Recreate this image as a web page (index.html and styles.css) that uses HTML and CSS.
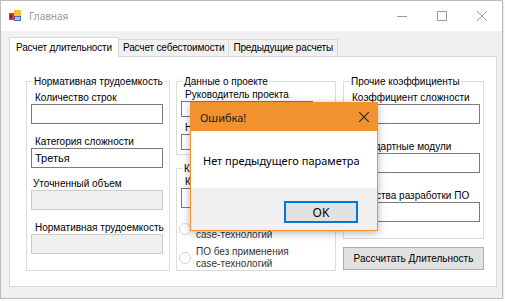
FILE: index.html
```html
<!DOCTYPE html>
<html lang="ru">
<head>
    <meta charset="UTF-8">
    <title>Главная</title>
    <link rel="stylesheet" href="styles.css">
</head>
<body>
    <div class="window">
        <div class="titlebar">
            <svg class="app-icon" width="12" height="12" viewBox="0 0 12 12">
                <rect x="0" y="3" width="5" height="7" fill="#d63a2f"/>
                <rect x="1" y="5" width="2" height="3" fill="#7a1c16"/>
                <rect x="5" y="0" width="7" height="6" fill="#f5c12e"/>
                <rect x="5" y="6" width="7" height="5" fill="#3d6fb8"/>
                <rect x="6" y="7" width="5" height="3" fill="#a9c4ea"/>
            </svg>
            <span class="title">Главная</span>
            <div class="caption-buttons">
                <span class="cap-btn">
                    <svg width="10" height="10" viewBox="0 0 10 10"><path d="M0 5.5h10" stroke="#9a9a9a" stroke-width="1"/></svg>
                </span>
                <span class="cap-btn">
                    <svg width="10" height="10" viewBox="0 0 10 10"><rect x="0.5" y="0.5" width="9" height="9" fill="none" stroke="#9a9a9a" stroke-width="1"/></svg>
                </span>
                <span class="cap-btn">
                    <svg width="10" height="10" viewBox="0 0 10 10"><path d="M0 0L10 10M10 0L0 10" stroke="#9a9a9a" stroke-width="1"/></svg>
                </span>
            </div>
        </div>

        <div class="client">
            <div class="tabs">
                <div class="tab active">Расчет длительности</div>
                <div class="tab">Расчет себестоимости</div>
                <div class="tab">Предыдущие расчеты</div>
            </div>

            <div class="tab-page">
                <fieldset class="group group-norm">
                    <legend>Нормативная трудоемкость</legend>
                    <div class="field first">
                        <label>Количество строк</label>
                        <input class="textbox" type="text">
                    </div>
                    <div class="field">
                        <label>Категория сложности</label>
                        <input class="textbox" type="text" value="Третья">
                    </div>
                    <div class="field tight">
                        <label class="shift">Уточненный объем</label>
                        <input class="textbox" type="text" disabled>
                    </div>
                    <div class="field">
                        <label>Нормативная трудоемкость</label>
                        <input class="textbox" type="text" disabled>
                    </div>
                </fieldset>

                <div class="column column-mid">
                    <fieldset class="group group-project">
                        <legend>Данные о проекте</legend>
                        <div class="field">
                            <label>Руководитель проекта</label>
                            <input class="textbox short" type="text">
                        </div>
                        <div class="field">
                            <label>Название проекта</label>
                            <input class="textbox short" type="text">
                        </div>
                    </fieldset>

                    <fieldset class="group group-tech">
                        <legend>Категория ПО</legend>
                        <div class="field">
                            <label>Количество модулей</label>
                            <input class="textbox" type="text">
                        </div>
                        <label class="radio">
                            <span class="radio-dot"></span>
                            <span>ПО с применением<br>case-технологий</span>
                        </label>
                        <label class="radio">
                            <span class="radio-dot"></span>
                            <span>ПО без применения<br>case-технологий</span>
                        </label>
                    </fieldset>
                </div>

                <div class="column column-right">
                    <fieldset class="group group-coef">
                        <legend>Прочие коэффициенты</legend>
                        <div class="field first">
                            <label>Коэффициент сложности</label>
                            <input class="textbox" type="text">
                        </div>
                        <div class="field">
                            <label>Стандартные модули</label>
                            <input class="textbox" type="text">
                        </div>
                        <div class="field">
                            <label>Средства разработки ПО</label>
                            <input class="textbox" type="text">
                        </div>
                    </fieldset>
                    <button class="calc-btn">Рассчитать Длительность</button>
                </div>
            </div>
        </div>

        <!-- message box on top of the form -->
        <div class="dialog">
            <div class="dialog-title">
                <span>Ошибка!</span>
                <svg width="10" height="10" viewBox="0 0 10 10"><path d="M0 0L10 10M10 0L0 10" stroke="#222" stroke-width="1.1"/></svg>
            </div>
            <div class="dialog-body">Нет предыдущего параметра</div>
            <div class="dialog-footer">
                <button class="ok-btn">OK</button>
            </div>
        </div>
    </div>
</body>
</html>
```

FILE: styles.css
```css
body {
    margin: 0;
    background-color: #fff;
    font-family: "Liberation Sans", Arial, sans-serif;
    font-size: 10px;
    color: #000;
}

.window {
    position: relative;
    width: 501px;
    height: 297px;
    border: 1px solid #bcbcbc;
    background-color: #f0f0f0;
    display: flex;
    flex-direction: column;
    box-shadow: 0 1px 2px rgba(0, 0, 0, 0.25);
}

.titlebar {
    height: 30px;
    flex-shrink: 0;
    background-color: #fff;
    display: flex;
    align-items: center;
}

.app-icon {
    margin-left: 8px;
}

.title {
    margin-left: 8px;
    font-family: "Noto Sans", sans-serif;
    font-size: 10px;
    color: #9a9a9a;
}

.caption-buttons {
    margin-left: auto;
    display: flex;
}

.cap-btn {
    width: 40px;
    height: 30px;
    display: flex;
    align-items: center;
    justify-content: center;
}

.client {
    flex: 1;
    padding: 6px 5px 0 8px;
}

.tabs {
    display: flex;
    align-items: flex-end;
    height: 19px;
    white-space: nowrap;
    letter-spacing: -0.15px;
}

.tab {
    box-sizing: border-box;
    height: 17px;
    line-height: 16px;
    padding: 0 4px;
    border: 1px solid #d9d9d9;
    border-bottom: none;
    border-left: none;
    background-color: #f0f0f0;
}

.tab.active {
    height: 20px;
    line-height: 20px;
    margin-bottom: -1px;
    padding: 0 6px;
    border-left: 1px solid #d9d9d9;
    background-color: #fff;
    position: relative;
    z-index: 1;
}

.tab-page {
    box-sizing: border-box;
    width: 488px;
    height: 231px;
    border: 1px solid #d9d9d9;
    background-color: #fff;
    padding: 18px 0 0 16px;
    display: flex;
}

.column {
    display: flex;
    flex-direction: column;
}

.group {
    box-sizing: border-box;
    margin: 0;
    padding: 0 4px;
    border: 1px solid #dcdcdc;
    min-width: 0;
    white-space: nowrap;
}

.group legend {
    margin-left: 2px;
    padding: 0 1px;
    line-height: 13px;
}

.group-norm {
    width: 144px;
    height: 196px;
}

.column-mid {
    width: 160px;
    margin-left: 6px;
}

.group-project {
    height: 80px;
}

.group-tech {
    height: 109px;
    margin-top: 7px;
}

.column-right {
    width: 141px;
    margin-left: 7px;
}

.group-coef {
    height: 164px;
}

.field {
    margin-top: 11px;
}

.field.first {
    margin-top: 3px;
}

.field.tight {
    margin-top: 9px;
}

.group-project .field {
    margin-top: 0;
}

.group-tech .field {
    margin-top: 0;
}

.group-coef .field {
    margin-top: 16px;
}

.group-coef .field.first {
    margin-top: 3px;
}

.field label {
    display: block;
    line-height: 13px;
    margin-left: 4px;
}

.field label.shift {
    margin-left: 2px;
}

.textbox {
    display: block;
    box-sizing: border-box;
    width: 132px;
    height: 20px;
    margin: 0;
    padding: 0 3px;
    border: 1px solid #7a7a7a;
    background-color: #fff;
    font-family: inherit;
    font-size: 11px;
    color: #000;
    outline: none;
}

.textbox:disabled {
    border-color: #cccccc;
    background-color: #f0f0f0;
}

.textbox.short {
    height: 16px;
    margin-bottom: 4px;
}

.radio {
    display: flex;
    align-items: center;
    margin-top: 9px;
    margin-left: -2px;
    line-height: 12px;
    color: #333;
}

.radio + .radio {
    margin-top: 5px;
}

.radio-dot {
    box-sizing: border-box;
    width: 12px;
    height: 12px;
    border: 1px solid #d4d4d4;
    border-radius: 50%;
    margin-right: 5px;
    flex-shrink: 0;
}

.calc-btn {
    margin-top: 8px;
    width: 141px;
    height: 23px;
    padding: 0;
    border: 1px solid #adadad;
    background-color: #e1e1e1;
    font-family: inherit;
    font-size: 10px;
    color: #000;
}

.dialog {
    position: absolute;
    left: 189px;
    top: 101px;
    width: 188px;
    height: 129px;
    box-sizing: border-box;
    border: 1px solid #f0932f;
    background-color: #fff;
    display: flex;
    flex-direction: column;
    box-shadow: 0 2px 8px rgba(0, 0, 0, 0.3);
    font-family: "Noto Sans", sans-serif;
    font-size: 11px;
}

.dialog-title {
    height: 28px;
    background-color: #f0932f;
    display: flex;
    align-items: center;
    justify-content: space-between;
    padding: 0 8px 0 9px;
    color: #1a1a1a;
}

.dialog-body {
    flex: 1;
    padding: 22px 0 0 12px;
}

.dialog-footer {
    height: 42px;
    background-color: #f0f0f0;
    display: flex;
    justify-content: flex-end;
    align-items: flex-start;
    padding: 13px 19px 0 0;
    box-sizing: border-box;
}

.ok-btn {
    width: 74px;
    height: 22px;
    padding: 0;
    border: 1px solid #0078d7;
    box-shadow: inset 0 0 0 1px #0078d7;
    background-color: #e1e1e1;
    font-family: inherit;
    font-size: 12px;
    color: #000;
}
```
